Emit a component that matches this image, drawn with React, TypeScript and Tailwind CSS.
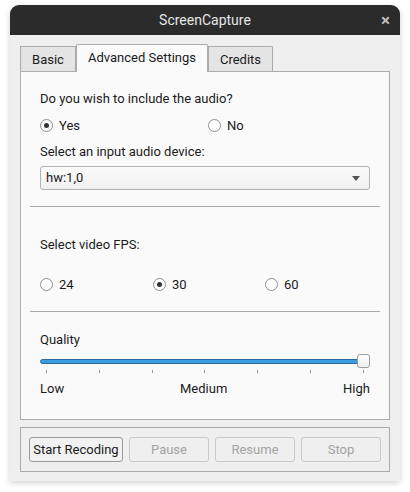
import React from 'react';

const font = { fontFamily: 'Roboto, "Liberation Sans", sans-serif' };

function Radio({ label, checked }: { label: string; checked?: boolean }) {
  return (
    <label className="flex items-center gap-[6px] text-[13px] text-[#1b1b1b] leading-none">
      <span className="w-[13px] h-[13px] rounded-full border border-[#8f8f8f] bg-white flex items-center justify-center">
        {checked && <span className="w-[5px] h-[5px] rounded-full bg-[#333]" />}
      </span>
      {label}
    </label>
  );
}

function Button({ label, disabled }: { label: string; disabled?: boolean }) {
  return (
    <button
      className={
        disabled
          ? 'h-[25px] w-[80px] rounded-[3px] border border-[#c9c9c9] bg-[#efefef] text-[13px] text-[#a3a3a3]'
          : 'h-[25px] w-[94px] rounded-[3px] border border-[#9a9a9a] bg-[#f1f1f1] text-[13px] text-[#1b1b1b]'
      }
    >
      {label}
    </button>
  );
}

export default function App() {
  const ticks = [0, 1, 2, 3, 4, 5, 6];

  return (
    <div className="w-[410px] h-[492px] bg-white pt-[5px] px-[10px]" style={font}>
      <div className="w-[390px] h-[476px] rounded-t-[9px] bg-[#efefef] shadow-[0_2px_6px_rgba(0,0,0,0.18)] flex flex-col">
        {/* title bar */}
        <div className="h-[30px] rounded-t-[9px] bg-[#2b2b2b] relative flex items-center justify-center">
          <span className="text-[14px] text-[#e6e6e6]">ScreenCapture</span>
          <span className="absolute right-[10px] top-[7px] text-[17px] font-bold text-[#bdbdbd] leading-none">×</span>
        </div>

        <div className="px-[10px] pt-[9px]">
          {/* tabs */}
          <div className="flex items-end h-[27px]">
            <div className="h-[25px] w-[56px] border border-b-0 border-[#ababab] bg-[#e4e4e4] flex items-center justify-center pt-px text-[13px] text-[#1b1b1b]">
              Basic
            </div>
            <div className="relative z-10 h-[28px] -mb-px w-[132px] border border-b-0 border-[#ababab] rounded-t-[2px] bg-[#fafafa] flex items-center justify-center pb-px text-[13px] text-[#1b1b1b]">
              Advanced Settings
            </div>
            <div className="h-[25px] w-[65px] border border-b-0 border-[#ababab] rounded-tr-[2px] bg-[#e4e4e4] flex items-center justify-center pt-px text-[13px] text-[#1b1b1b]">
              Credits
            </div>
          </div>

          {/* panel */}
          <div className="h-[349px] border border-[#ababab] bg-[#fafafa] text-[13px] text-[#1b1b1b] flex flex-col">
            <div className="px-[19px] pt-[19px]">
              <p className="leading-[16px]">Do you wish to include the audio?</p>
              <div className="grid grid-cols-[168px_1fr] mt-[12px]">
                <Radio label="Yes" checked />
                <Radio label="No" />
              </div>
              <p className="leading-[16px] mt-[12px]">Select an input audio device:</p>
              <div className="mt-[6px] h-[24px] rounded-[3px] border border-[#b3b3b3] bg-gradient-to-b from-[#fbfbfb] to-[#f0f0f0] flex items-center justify-between pl-[5px] pr-[9px]">
                <span>hw:1,0</span>
                <span className="w-0 h-0 border-l-[4px] border-r-[4px] border-t-[5px] border-l-transparent border-r-transparent border-t-[#555]" />
              </div>
            </div>
            <div className="mx-[9px] mt-[16px] h-px bg-[#a9a9a9]" />

            <div className="px-[19px] pt-[30px]">
              <p className="leading-[16px]">Select video FPS:</p>
              <div className="grid grid-cols-[113px_112px_1fr] mt-[25px]">
                <Radio label="24" />
                <Radio label="30" checked />
                <Radio label="60" />
              </div>
            </div>
            <div className="mx-[9px] mt-[20px] h-px bg-[#a9a9a9]" />

            <div className="px-[19px] pt-[20px]">
              <p className="leading-[16px]">Quality</p>
              <div className="relative mt-[7px] h-[13px] flex items-center">
                <div className="h-[5px] flex-1 rounded-full border border-[#2a6a9c] bg-[#3d9be2] mr-[4px]" />
                <div className="absolute right-0 top-[-1px] w-[13px] h-[14px] rounded-[3px] border border-[#9c9c9c] bg-gradient-to-b from-white to-[#eeeeee]" />
              </div>
              <div className="flex justify-between px-[6px] mt-[2px]">
                {ticks.map((t) => (
                  <span key={t} className="w-px h-[3px] bg-[#9a9a9a]" />
                ))}
              </div>
              <div className="flex justify-between mt-[8px] leading-[16px]">
                <span>Low</span>
                <span>Medium</span>
                <span>High</span>
              </div>
            </div>
          </div>

          {/* buttons */}
          <div className="mt-[7px] h-[45px] border border-[#ababab] flex items-center gap-[6px] pl-[8px]">
            <Button label="Start Recoding" />
            <Button label="Pause" disabled />
            <Button label="Resume" disabled />
            <Button label="Stop" disabled />
          </div>
        </div>
      </div>
    </div>
  );
}
